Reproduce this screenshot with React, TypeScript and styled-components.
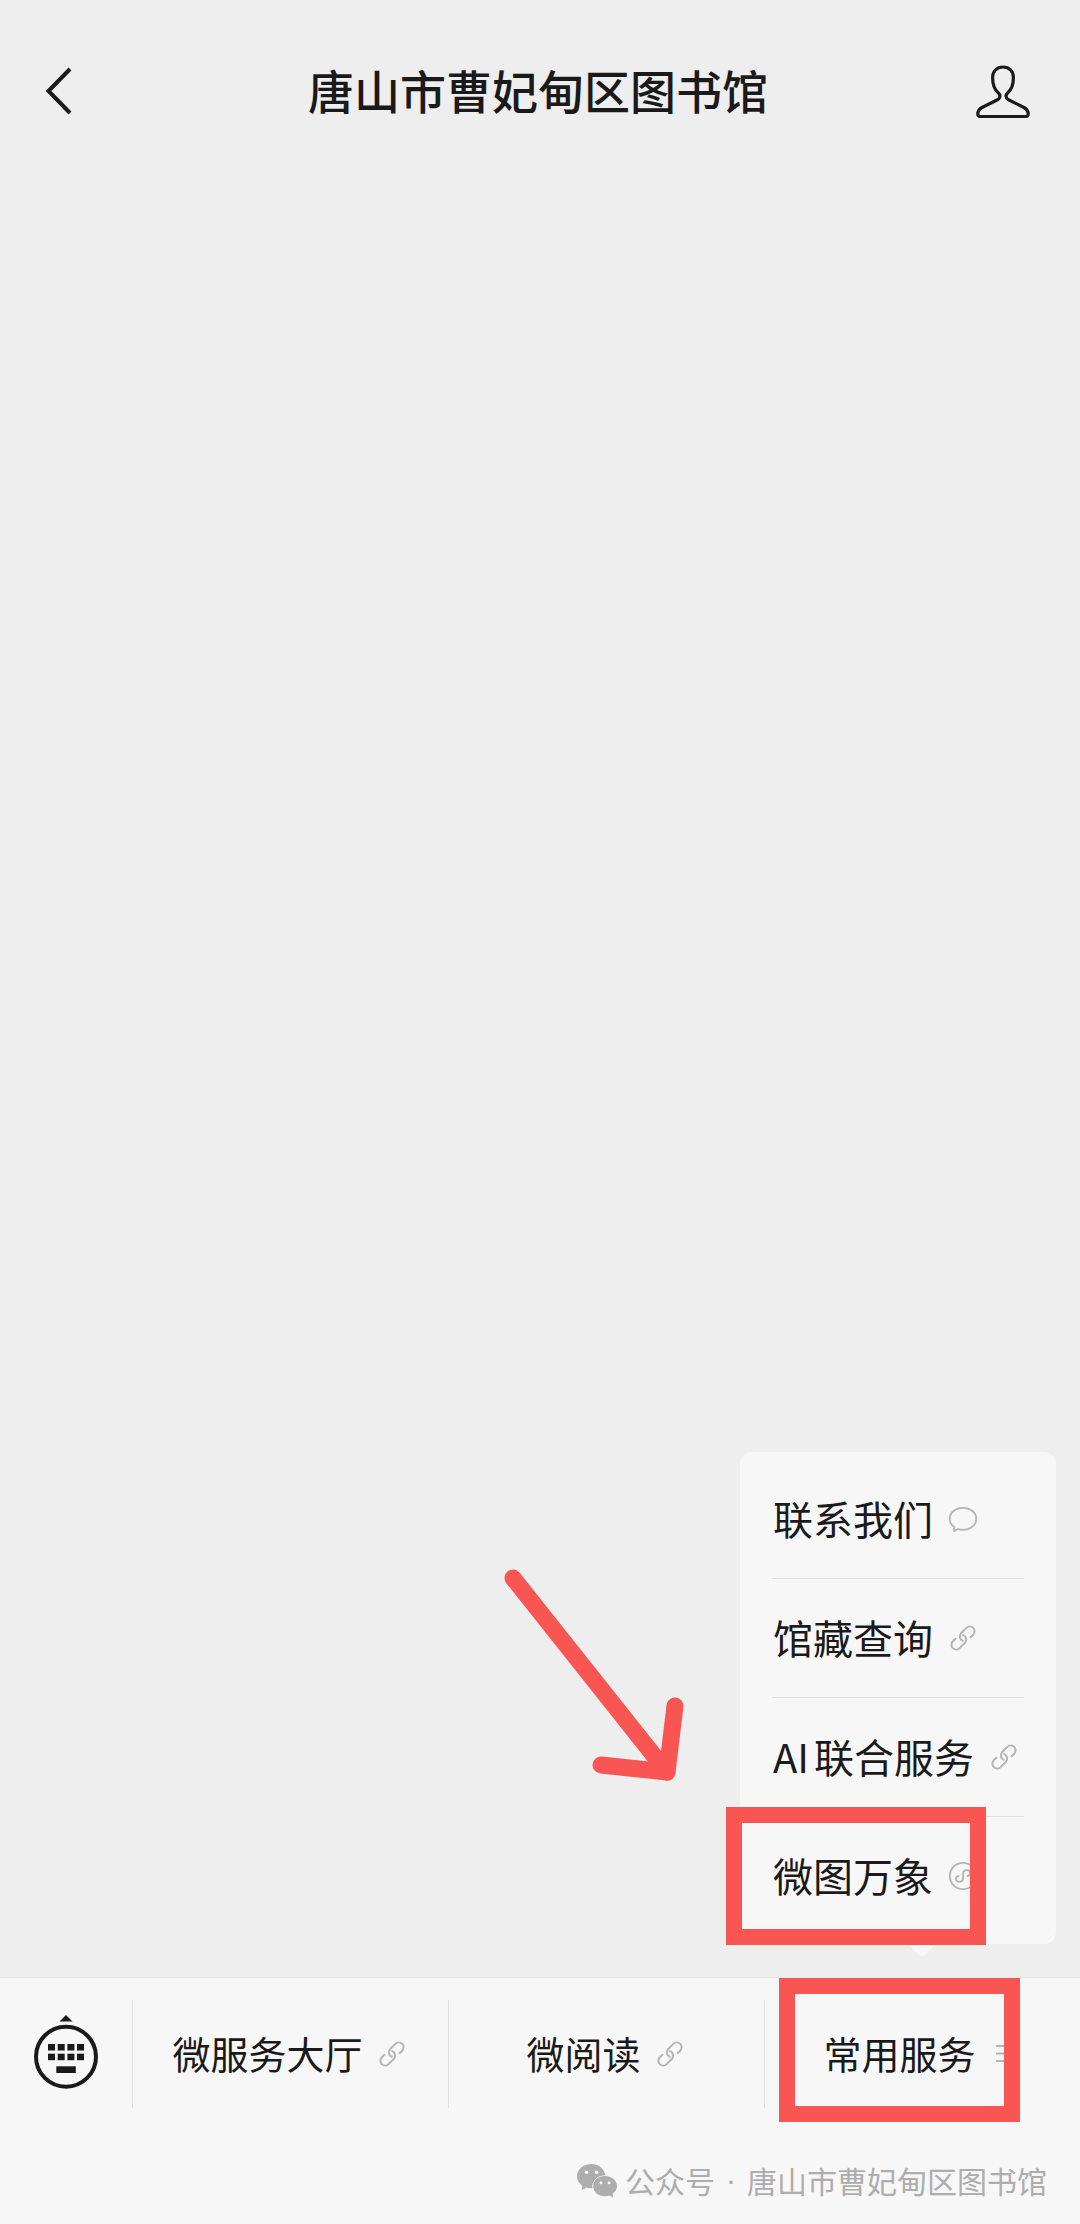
import React from "react";
import styled, { createGlobalStyle } from "styled-components";

const ink = "#1a1a1a";
const muted = "#b4b4b4";
const surface = "#f7f7f7";
const hairline = "#e2e2e2";
const accent = "#f95552";

const GlobalStyle = createGlobalStyle`
  *, *::before, *::after { box-sizing: border-box; }
  body {
    margin: 0;
    background: #eeeeee;
    color: ${ink};
    font-family: "Noto Sans CJK SC", "Noto Sans", sans-serif;
  }
  button {
    margin: 0;
    padding: 0;
    border: 0;
    background: none;
    color: inherit;
    font: inherit;
  }
  svg { display: block; flex: none; overflow: visible; }
`;

const Page = styled.div`
  display: flex;
  flex-direction: column;
  min-height: 100vh;
`;

const Header = styled.header`
  display: flex;
  align-items: center;
  justify-content: space-between;
  padding: 57px 48px 0 44px;
`;

const HeaderButton = styled.button`
  display: flex;
  width: 64px;
  height: 64px;
  align-items: center;
  justify-content: ${(p: { $end?: boolean }) => (p.$end ? "flex-end" : "flex-start")};
`;

const Title = styled.h1`
  margin: 0;
  padding-bottom: 4px;
  font-size: 46px;
  line-height: 64px;
  font-weight: 500;
`;

const Chat = styled.main`
  display: flex;
  flex: 1;
  flex-direction: column;
  align-items: flex-end;
  justify-content: flex-end;
  padding: 0 24px 33px;
`;

const Popup = styled.nav`
  position: relative;
  width: 316px;
  padding: 8px 32px;
  border-radius: 12px;
  background: ${surface};

  &::after {
    content: "";
    position: absolute;
    bottom: -10px;
    left: calc(50% + 14px);
    width: 20px;
    height: 20px;
    border-radius: 4px;
    background: ${surface};
    transform: rotate(45deg);
  }
`;

const PopupRow = styled.div`
  position: relative;
  z-index: 1;
  height: 119px;
  border-bottom: 1px solid ${hairline};
  &:last-of-type { border-bottom-color: transparent; }
`;

const PopupButton = styled.button`
  display: flex;
  width: 100%;
  height: 100%;
  align-items: center;
  gap: 14px;
  padding-left: 1px;
  font-size: 40px;
  line-height: 60px;
  white-space: nowrap;
  text-autospace: normal;
`;

const Label = styled.span`
  padding-bottom: 3px;
`;

const Highlight = styled.span`
  position: absolute;
  border: 16px solid ${accent};
  pointer-events: none;
`;

const RowHighlight = styled(Highlight)`
  inset: -10px 38px -10px -46px;
`;

const TabHighlight = styled(Highlight)`
  inset: -22px 60px -14px 14px;
`;

const Pointer = styled.svg`
  position: absolute;
  right: 100%;
  bottom: 160px;
  margin-right: 55px;
`;

const Footer = styled.footer`
  border-top: 1px solid #e6e6e6;
  background: ${surface};
`;

const Tabs = styled.nav`
  display: flex;
  height: 108px;
  margin-top: 22px;
`;

const KeyboardButton = styled.button`
  display: flex;
  width: 132px;
  align-items: center;
  justify-content: center;
`;

const Tab = styled.div`
  position: relative;
  flex: 1;
  border-left: 1px solid ${hairline};
`;

const TabButton = styled.button`
  display: flex;
  width: 100%;
  height: 100%;
  align-items: center;
  justify-content: center;
  gap: 13px;
  padding-right: 1px;
  font-size: 38px;
  line-height: 56px;
  white-space: nowrap;
`;

const Credit = styled.div`
  display: flex;
  align-items: center;
  justify-content: flex-end;
  gap: 8px;
  padding: 54px 33px 24px;
  color: #adadad;
  font-size: 30px;
  line-height: 36px;
`;

const CreditName = styled.span`
  display: flex;
  gap: 11px;
  padding-bottom: 2px;
`;

const Dot = styled.span`
  font-family: "Liberation Sans", Arial, sans-serif;
`;

const LinkIcon = () => (
  <svg width="32" height="32" viewBox="-3 -3 32 32" fill="none" stroke={muted} strokeWidth="2" strokeLinecap="round" aria-hidden="true">
    <path d="M12.8 15.900A4.800 4.800 0 0 1 11 8.300L16.400 2.900A4.800 4.800 0 0 1 23.200 9.700L20.600 12.300" />
    <path d="M13.200 10.100A4.800 4.800 0 0 1 15 17.700L9.600 23.100A4.800 4.800 0 0 1 2.800 16.300L5.400 13.700" />
  </svg>
);

const BubbleIcon = () => (
  <svg width="32" height="32" viewBox="0 0 32 32" fill="none" stroke={muted} strokeWidth="1.8" strokeLinejoin="round" aria-hidden="true">
    <path d="M7.500 24.200C4.600 22.200 2.700 19.300 2.700 15.800C2.700 9.500 8.500 4.800 16 4.800S29.300 9.500 29.300 15.800S23.500 26.800 16 26.800C14.200 26.800 12.500 26.600 11 26L7 28Z" />
  </svg>
);

const MiniProgramIcon = () => (
  <svg width="32" height="32" viewBox="0 0 32 32" fill="none" stroke={muted} strokeWidth="1.8" strokeLinecap="round" aria-hidden="true">
    <circle cx="16" cy="16" r="13.200" />
    <path d="M11.500 15.800C7.500 17 8.500 21.800 12 21.800C14.500 21.800 16 20.300 16 18.200V13.800C16 11.700 17.500 10.200 20 10.200C23.500 10.200 24.500 15 20.500 16.200" />
  </svg>
);

const ListIcon = () => (
  <svg width="32" height="32" viewBox="0 0 32 32" stroke={muted} strokeWidth="1.800" aria-hidden="true">
    <path d="M7 8H27M7 15.500H27M7 23H27" />
  </svg>
);

const BackIcon = () => (
  <svg width="28" height="48" viewBox="0 0 28 48" fill="none" stroke={ink} strokeWidth="4" aria-hidden="true">
    <path d="M26 2L4.500 24L26 46" />
  </svg>
);

const PersonIcon = () => (
  <svg width="60" height="56" viewBox="0 0 60 56" fill="none" stroke={ink} strokeWidth="3.200" strokeLinejoin="round" aria-hidden="true">
    <path d="M31 4C24.500 4 20.600 8.500 20.600 14.500C20.600 21 22 26 26 29.500C28.800 32 28.500 35 25.500 36.800L10 44.500C7 46.200 5.800 48 5.800 51Q5.800 53.500 8 53.500H54Q56.200 53.500 56.200 51C56.200 48 55 46.200 52 44.500L36.500 36.800C33.500 35 33.200 32 36 29.500C40 26 41.400 21 41.400 14.500C41.400 8.500 37.500 4 31 4Z" />
  </svg>
);

const KeyboardIcon = () => (
  <svg width="64" height="78" viewBox="0 0 64 78" fill={ink} aria-hidden="true">
    <path d="M32 0L38.500 6.500H25.500Z" />
    <circle cx="32" cy="41.700" r="30" fill="none" stroke={ink} strokeWidth="4" />
    {[29, 38.7].map((y) =>
      [14, 23.7, 33.4, 43].map((x) => <rect key={`${x}-${y}`} x={x} y={y} width="7" height="6.500" />)
    )}
    <rect x="22.300" y="51.300" width="19.500" height="6.700" />
  </svg>
);

const WechatIcon = () => (
  <svg width="40" height="34" viewBox="0 0 40 34" fill="#adadad" aria-hidden="true">
    <path d="M14.500 0C6.500 0 0 5.300 0 12.200C0 16.300 2.200 19.600 5.500 21.800L4.500 26.200L9.500 23.600C11.200 24.100 13 24.300 15.500 24.200C14.200 17.300 20 11.300 28.500 11.200C27.200 4.800 21.500 0 14.500 0Z" />
    <path d="M28 12C21.300 12 16.200 16.500 16.200 22.200C16.200 27.900 21.300 32.200 28 32.200C29.700 32.200 31.200 32 32.500 31.500L36.200 33.500L35.500 29.800C38.300 28 40 25.300 40 22.200C40 16.500 34.700 12 28 12Z" />
    <g fill={surface}>
      <circle cx="9.500" cy="8.300" r="1.800" />
      <circle cx="19.500" cy="8.300" r="1.800" />
      <circle cx="24" cy="18.800" r="1.500" />
      <circle cx="32" cy="18.800" r="1.500" />
    </g>
  </svg>
);

const menu = [
  { label: "联系我们", Icon: BubbleIcon },
  { label: "馆藏查询", Icon: LinkIcon },
  { label: "AI联合服务", Icon: LinkIcon },
  { label: "微图万象", Icon: MiniProgramIcon, marked: true },
];

const tabs = [
  { label: "微服务大厅", Icon: LinkIcon },
  { label: "微阅读", Icon: LinkIcon },
  { label: "常用服务", Icon: ListIcon, marked: true },
];

export default function App() {
  return (
    <Page>
      <GlobalStyle />
      <Header>
        <HeaderButton type="button" aria-label="返回"><BackIcon /></HeaderButton>
        <Title>唐山市曹妃甸区图书馆</Title>
        <HeaderButton type="button" $end aria-label="账号资料"><PersonIcon /></HeaderButton>
      </Header>
      <Chat>
        <Popup>
          {menu.map(({ label, Icon, marked }) => (
            <PopupRow key={label}>
              <PopupButton type="button"><Label>{label}</Label><Icon /></PopupButton>
              {marked && <RowHighlight />}
            </PopupRow>
          ))}
          <Pointer width="184" height="216" viewBox="0 0 184 216" fill="none" stroke={accent} strokeWidth="17" strokeLinecap="round" strokeLinejoin="round" aria-hidden="true">
            <path d="M12 10L166 204" />
            <path d="M174 138L166 204L100 197" />
          </Pointer>
        </Popup>
      </Chat>
      <Footer>
        <Tabs>
          <KeyboardButton type="button" aria-label="切换键盘"><KeyboardIcon /></KeyboardButton>
          {tabs.map(({ label, Icon, marked }) => (
            <Tab key={label}>
              <TabButton type="button"><Label>{label}</Label><Icon /></TabButton>
              {marked && <TabHighlight />}
            </Tab>
          ))}
        </Tabs>
        <Credit>
          <WechatIcon />
          <CreditName>
            <span>公众号</span>
            <Dot>·</Dot>
            <span>唐山市曹妃甸区图书馆</span>
          </CreditName>
        </Credit>
      </Footer>
    </Page>
  );
}
